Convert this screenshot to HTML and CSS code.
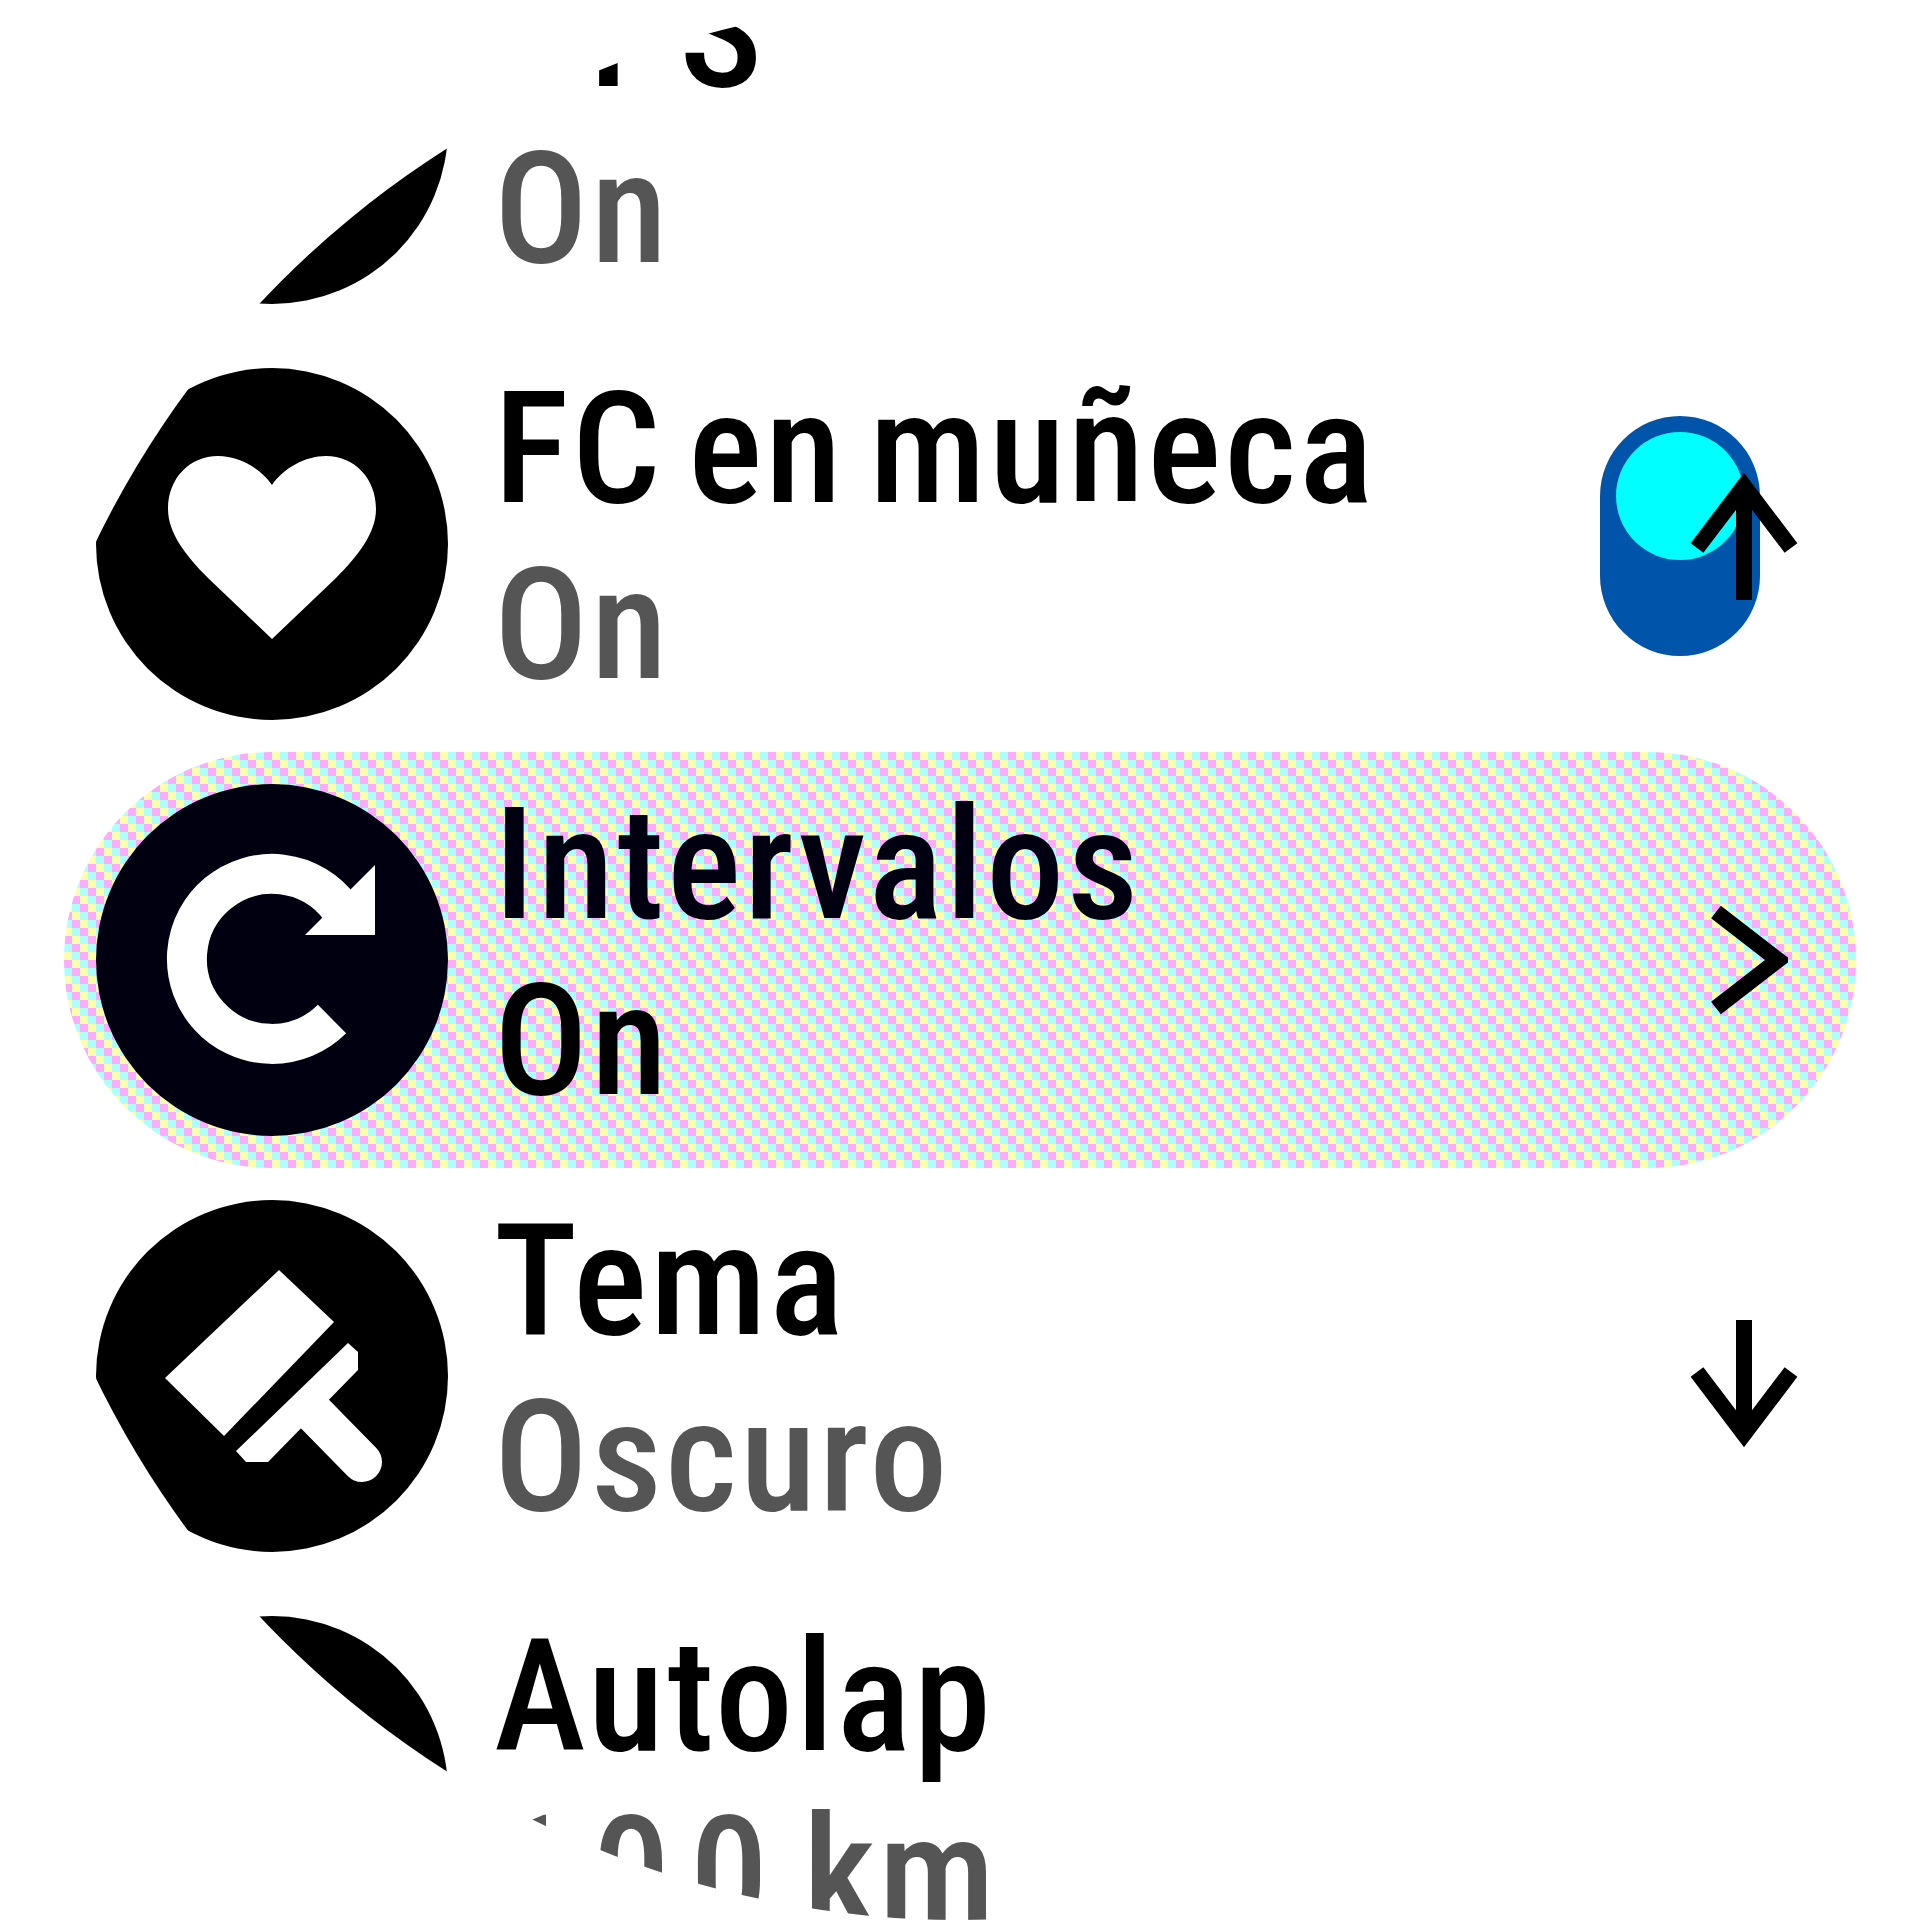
FILE: index.html
```html
<!DOCTYPE html>
<html lang="es">
<head>
  <meta charset="UTF-8">
  <title>Ajustes de ejercicio</title>
  <link rel="stylesheet" href="styles.css">
</head>
<body>
  <div class="screen">
    <div class="list">
      <div class="row">
        <svg class="icon" viewBox="0 0 352 352"><circle cx="176" cy="176" r="176"/></svg>
        <div class="text">
          <div class="title">GPS</div>
          <div class="sub">On</div>
        </div>
      </div>

      <div class="row">
        <svg class="icon" viewBox="0 0 352 352">
          <circle cx="176" cy="176" r="176"/>
          <path class="glyph" d="M176 271 L112 210 C90 188 72 165 72 141 C72 110 94 88 122 88 C143 88 164 100 176 117 C188 100 209 88 230 88 C258 88 280 110 280 141 C280 165 262 188 240 210 Z"/>
        </svg>
        <div class="text">
          <div class="title">FC en muñeca</div>
          <div class="sub">On</div>
        </div>
        <div class="toggle"><div class="knob"></div></div>
      </div>

      <div class="row selected">
        <svg class="icon" viewBox="0 0 352 352">
          <circle cx="176" cy="176" r="176"/>
          <path class="glyph-line" d="M236 235 A85 85 0 1 1 244 124"/>
          <polygon class="glyph" points="279,81 279,151 209,151"/>
        </svg>
        <div class="text">
          <div class="title">Intervalos</div>
          <div class="sub">On</div>
        </div>
        <svg class="chevron" viewBox="0 0 80 112"><polyline points="8,8 70,56 8,104"/></svg>
      </div>

      <div class="row">
        <svg class="icon" viewBox="0 0 352 352">
          <circle cx="176" cy="176" r="176"/>
          <polygon class="glyph" points="183,70 238,122 128,236 69,178"/>
          <polygon class="glyph" points="252,143 262,152 262,170 172,262 150,262 140,251"/>
          <line class="glyph-handle" x1="215" y1="210" x2="266" y2="262"/>
        </svg>
        <div class="text">
          <div class="title">Tema</div>
          <div class="sub">Oscuro</div>
        </div>
      </div>

      <div class="row">
        <svg class="icon" viewBox="0 0 352 352"><circle cx="176" cy="176" r="176"/></svg>
        <div class="text">
          <div class="title">Autolap</div>
          <div class="sub"><span class="digits">100</span> km</div>
        </div>
      </div>
    </div>

    <!-- flechas de los botones, van encima de la lista -->
    <svg class="arrow arrow-up" viewBox="0 0 128 140"><path d="M64 132 V20 M17 80 L64 18 L111 80"/></svg>
    <svg class="arrow arrow-down" viewBox="0 0 128 140"><path d="M64 8 V120 M17 60 L64 122 L111 60"/></svg>
  </div>
</body>
</html>
```

FILE: styles.css
```css
body {
  margin: 0;
  background-color: #fff;
  font-family: Roboto, "Liberation Sans", Arial, sans-serif;
}
.screen {
  position: relative;
  width: 1920px;
  height: 1920px;
  border-radius: 50%;
  overflow: hidden;
}
.list {
  margin-top: -80px;
}
.row {
  display: flex;
  align-items: center;
  gap: 46px;
  box-sizing: border-box;
  height: 416px;
  margin: 0 64px;
  padding: 0 96px 0 32px;
}
.row.selected {
  border-radius: 208px;
  color: #000010;
  background-image: url("data:image/svg+xml,%3Csvg xmlns='http://www.w3.org/2000/svg' width='24' height='24' shape-rendering='crispEdges'%3E%3Crect width='24' height='24' fill='%23ffffaa'/%3E%3Cpath fill='%23aaffff' d='M0 0h8v8H0zM8 8h8v8H8zM16 16h8v8h-8z'/%3E%3Cpath fill='%23ffaaff' d='M8 0h8v8H8zM16 8h8v8h-8zM0 16h8v8H0z'/%3E%3C/svg%3E");
}
.icon {
  flex: none;
  width: 352px;
  height: 352px;
  fill: currentColor;
}
.glyph {
  fill: #fff;
}
.glyph-line {
  fill: none;
  stroke: #fff;
  stroke-width: 40;
}
.glyph-handle {
  stroke: #fff;
  stroke-width: 40;
  stroke-linecap: round;
}
.text {
  margin-bottom: 14px;
  white-space: nowrap;
}
.title,
.sub {
  height: 176px;
  font-size: 156px;
  font-weight: 500;
  font-stretch: 85%;
  line-height: 176px;
  letter-spacing: 3px;
  word-spacing: -14px;
}
.sub {
  color: #555;
}
.selected .sub {
  color: #000;
}
.digits {
  margin-right: -10px;
  letter-spacing: 20px;
}
.toggle {
  flex: none;
  box-sizing: border-box;
  width: 160px;
  height: 240px;
  margin-left: auto;
  margin-bottom: 16px;
  padding: 16px;
  border-radius: 80px;
  background-color: #0055aa;
}
.knob {
  width: 128px;
  height: 128px;
  border-radius: 50%;
  background-color: #00ffff;
}
.chevron {
  flex: none;
  width: 80px;
  height: 112px;
  margin-left: auto;
  margin-right: -28px;
}
.chevron polyline {
  fill: none;
  stroke: #000;
  stroke-width: 16;
}
.arrow {
  position: absolute;
  left: 1680px;
  width: 128px;
  height: 140px;
  fill: none;
  stroke: #000;
  stroke-width: 16;
}
.arrow-up {
  top: 468px;
}
.arrow-down {
  top: 1312px;
}
```
